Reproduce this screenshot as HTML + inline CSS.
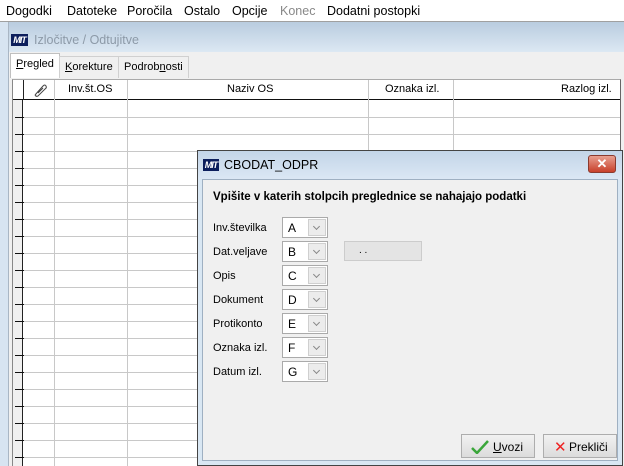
<!DOCTYPE html>
<html><head><meta charset="utf-8"><style>
*{box-sizing:border-box;margin:0;padding:0}
body{width:624px;height:466px;overflow:hidden;position:relative;background:#f0f0f0;font-family:"Liberation Sans",sans-serif;font-size:12px;color:#000}
.abs{position:absolute}
#menu{left:0;top:0;width:624px;height:22px;background:#fff;border-bottom:1px solid #a0a0a0}
#menu span{position:absolute;top:4px;font-size:12.5px}
#left{left:0;top:22px;width:9px;height:444px;background:#d7e4f1;border-right:1px solid #a9b6c4}
#title{left:9px;top:22px;width:615px;height:30px;background:linear-gradient(#b9ccdf,#dce8f3)}
.logo{background:#0c1e5c;color:#fff;font-weight:bold;font-style:italic;font-size:9px;line-height:12px;text-align:center;letter-spacing:-1px}
.tab{top:56px;height:22px;border:1px solid #d0d0d0;border-bottom:none;padding:4px 5px;font-size:11px;background:#f0f0f0;white-space:nowrap}
#grid{left:12px;top:79px;width:609px;height:387px;background:#fff;border-left:1px solid #888;border-right:1px solid #666;border-top:1px solid #aaa;overflow:hidden}
.vl{position:absolute;top:0;width:1px;height:387px;background:#c8c8c8}
.hd{position:absolute;top:3px;font-size:11px;white-space:nowrap}
#dlg{left:197px;top:150px;width:426px;height:316px;background:#d9e7f3;border:1px solid #444}
#dt{left:0;top:0;width:424px;height:28px;background:linear-gradient(#c3d5e8,#dbe7f4)}
#dc{left:4px;top:28px;width:416px;height:282px;background:#f0f0f0;border:1px solid #9fb0c2}
.lab{position:absolute;left:10px;font-size:11px}
.cb{position:absolute;left:79px;width:46px;height:21px;background:#fff;border:1px solid #aaa}
.cb b{position:absolute;left:5px;top:3px;font-weight:normal;font-size:12px}
.cb i{position:absolute;right:1px;top:1px;width:18px;height:17px;background:#ececec;border:1px solid #cfcfcf}
.cb i:after{content:"";position:absolute;left:5px;top:4px;width:4px;height:4px;border-right:1px solid #888;border-bottom:1px solid #888;transform:rotate(45deg)}
.btn{position:absolute;height:24px;background:linear-gradient(#f2f2f2,#dcdcdc);border:1px solid #adadad;font-size:12px}
</style></head><body>
<div id="menu" class="abs">
<span style="left:6px">Dogodki</span><span style="left:67px">Datoteke</span><span style="left:127px">Poročila</span><span style="left:184px">Ostalo</span><span style="left:232px">Opcije</span><span style="left:280px;color:#888">Konec</span><span style="left:327px">Dodatni postopki</span>
</div>
<div id="left" class="abs"></div>
<div id="title" class="abs">
<div class="logo abs" style="left:2px;top:12px;width:17px;height:12px">MIT</div>
<span class="abs" style="left:25px;top:11px;color:#8d9aa8;font-size:12.5px">Izločitve / Odtujitve</span>
</div>
<div class="abs tab" style="left:10px;top:53px;height:25px;background:#fff;border-color:#c0c0c0"><u>P</u>regled</div>
<div class="abs tab" style="left:59px"><u>K</u>orekture</div>
<div class="abs tab" style="left:118px">Podrob<u>n</u>osti</div>
<div id="grid" class="abs">
<div class="abs" style="left:0;top:0;width:10px;height:387px;background:#f0f0f0;border-right:1px solid #222"></div>
<div class="vl" style="left:41px"></div><div class="vl" style="left:114px"></div><div class="vl" style="left:355px"></div><div class="vl" style="left:440px"></div>
<div class="abs" style="left:0;top:0;width:609px;height:20px;background:#fff;border-bottom:1px solid #111"></div>
<div class="abs" style="left:10px;top:0;width:1px;height:20px;background:#222"></div>
<div class="vl" style="left:41px;height:20px"></div><div class="vl" style="left:114px;height:20px"></div><div class="vl" style="left:355px;height:20px"></div><div class="vl" style="left:440px;height:20px"></div>
<svg class="abs" style="left:19px;top:3px" width="16" height="14" viewBox="0 0 16 14"><path d="M3 12 L11 3 Q13 1 14 3 Q15 5 13 6 L6 13 Q4 14 3 12 M6 10 L11 5" fill="none" stroke="#444" stroke-width="1"/></svg>
<span class="hd" style="left:55px">Inv.št.OS</span>
<span class="hd" style="left:214px">Naziv OS</span>
<span class="hd" style="left:372px">Oznaka izl.</span>
<span class="hd" style="left:548px">Razlog izl.</span>
<div id="rows"></div>
</div>
<script>
var r=document.getElementById('rows'),h='';
for(var y=37;y<390;y+=17){h+='<div class="abs" style="left:11px;top:'+y+'px;width:598px;height:1px;background:#c8c8c8"></div><div class="abs" style="left:2px;top:'+y+'px;width:9px;height:1px;background:#111"></div>';}
r.innerHTML=h;
</script>
<div id="dlg" class="abs">
<div id="dt" class="abs">
<div class="logo abs" style="left:5px;top:8px;width:16px;height:12px">MIT</div>
<span class="abs" style="left:26px;top:7px;font-size:12.5px">CBODAT_ODPR</span>
<div class="abs" style="left:390px;top:4px;width:28px;height:18px;background:linear-gradient(#e8a090,#c8402a);border:1px solid #8a3a2e;border-radius:3px;color:#fff;font-weight:bold;text-align:center;font-size:13px;line-height:16px">✕</div>
</div>
<div id="dc" class="abs">
<div class="abs" style="left:10px;top:11px;font-weight:bold;font-size:11.5px">Vpišite v katerih stolpcih preglednice se nahajajo podatki</div>
<span class="lab" style="top:42px">Inv.številka</span><div class="cb" style="top:37px"><b>A</b><i></i></div>
<span class="lab" style="top:66px">Dat.veljave</span><div class="cb" style="top:61px"><b>B</b><i></i></div>
<div class="abs" style="left:141px;top:61px;width:78px;height:20px;background:#e4e4e4;border:1px solid #ccc;padding:3px 0 0 14px;font-size:10px">. .</div>
<span class="lab" style="top:90px">Opis</span><div class="cb" style="top:85px"><b>C</b><i></i></div>
<span class="lab" style="top:114px">Dokument</span><div class="cb" style="top:109px"><b>D</b><i></i></div>
<span class="lab" style="top:138px">Protikonto</span><div class="cb" style="top:133px"><b>E</b><i></i></div>
<span class="lab" style="top:162px">Oznaka izl.</span><div class="cb" style="top:157px"><b>F</b><i></i></div>
<span class="lab" style="top:186px">Datum izl.</span><div class="cb" style="top:181px"><b>G</b><i></i></div>
<div class="btn" style="left:258px;width:74px;top:254px"><svg class="abs" style="left:9px;top:5px" width="18" height="14"><path d="M1 8 L6 13 L17 1" fill="none" stroke="#3aa63a" stroke-width="2.5"/></svg><span class="abs" style="left:31px;top:5px"><u>U</u>vozi</span></div>
<div class="btn" style="left:340px;width:74px;top:254px"><span class="abs" style="left:10px;top:3px;color:#e22;font-size:15px">✕</span><span class="abs" style="left:25px;top:5px">Prekliči</span></div>
</div>
</div>
</body></html>
